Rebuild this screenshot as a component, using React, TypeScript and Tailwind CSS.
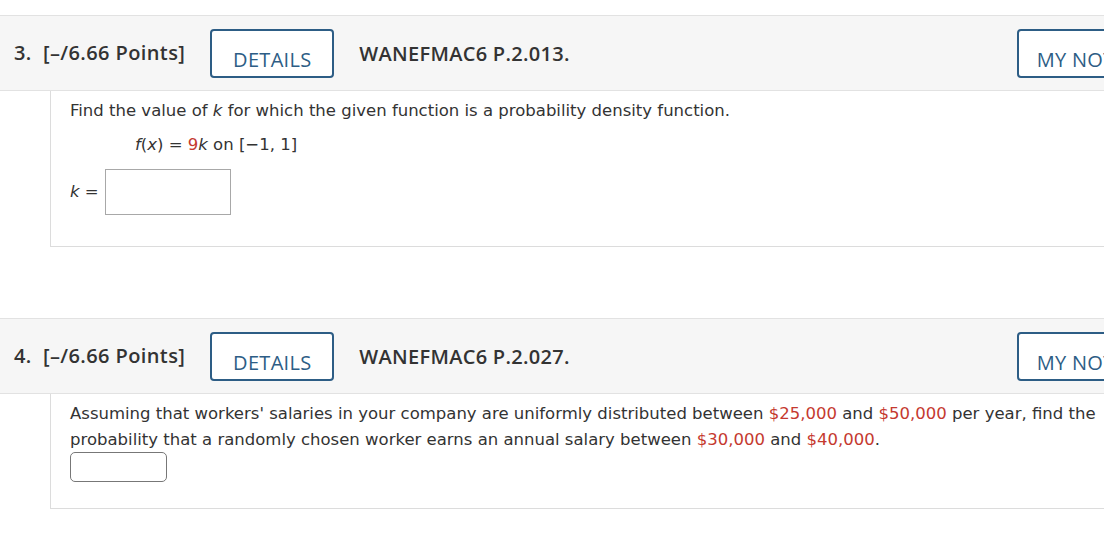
import React from 'react';

const red = 'text-[#c5392f]';

const QuestionHeader: React.FC<{ num: string; code: string }> = ({ num, code }) => (
  <div className="flex h-[76px] items-center border-y border-[#e2e2e2] bg-[#f6f6f6] pl-[14px] pr-[10px] font-['Open_Sans',sans-serif] text-[#333]">
    <span className="text-[20px] font-semibold tracking-[0.4px]">
      {num}&nbsp; [–/6.66 Points]
    </span>
    <button className="ml-[25px] flex h-[49px] w-[124px] items-end justify-center rounded-[4px] border-2 border-[#2d5d85] bg-white pb-[1px] text-[20px] tracking-[0.3px] text-[#2d5d85]">
      DETAILS
    </button>
    <span className="ml-[25px] pt-[2px] text-[20px] font-semibold tracking-[0.3px]">{code}</span>
    <button className="ml-auto flex h-[49px] w-[140px] items-end justify-center rounded-[4px] border-2 border-[#2d5d85] bg-white pb-[1px] text-[20px] tracking-[0.3px] text-[#2d5d85]">
      MY NOTES
    </button>
  </div>
);

const App: React.FC = () => {
  return (
    <div className="h-[551px] w-[1104px] overflow-hidden bg-white">
      <div className="w-[1167px] pt-[15px]">
        <QuestionHeader num="3." code="WANEFMAC6 P.2.013." />
        <div className="ml-[50px] border-b border-l border-[#dcdcdc] pb-[31px] pl-[19px] pt-[8px] font-['DejaVu_Sans',Verdana,sans-serif] text-[16.5px] text-[#333]">
          <p className="leading-[24px]">
            Find the value of <i>k</i> for which the given function is a probability density function.
          </p>
          <p className="ml-[65px] mt-[10px] leading-[24px]">
            <i>f</i>(<i>x</i>) = <span className={red}>9</span><i>k</i> on [−1, 1]
          </p>
          <div className="mt-[12px] flex items-center">
            <span><i>k</i> =</span>
            <div className="ml-[6px] h-[46px] w-[126px] border border-[#a8a8a8]" />
          </div>
        </div>

        <div className="h-[71px]" />

        <QuestionHeader num="4." code="WANEFMAC6 P.2.027." />
        <div className="ml-[50px] h-[115px] border-b border-l border-[#dcdcdc] pl-[19px] pt-[7px] font-['DejaVu_Sans',Verdana,sans-serif] text-[16.5px] text-[#333]">
          <p className="w-[1034px] leading-[26px]">
            Assuming that workers' salaries in your company are uniformly distributed between{' '}
            <span className={red}>$25,000</span> and <span className={red}>$50,000</span> per year, find the
            probability that a randomly chosen worker earns an annual salary between{' '}
            <span className={red}>$30,000</span> and <span className={red}>$40,000</span>.
          </p>
          <div className="mt-[-1px] h-[30px] w-[97px] rounded-[5px] border border-[#777]" />
        </div>
      </div>
    </div>
  );
};

export default App;
